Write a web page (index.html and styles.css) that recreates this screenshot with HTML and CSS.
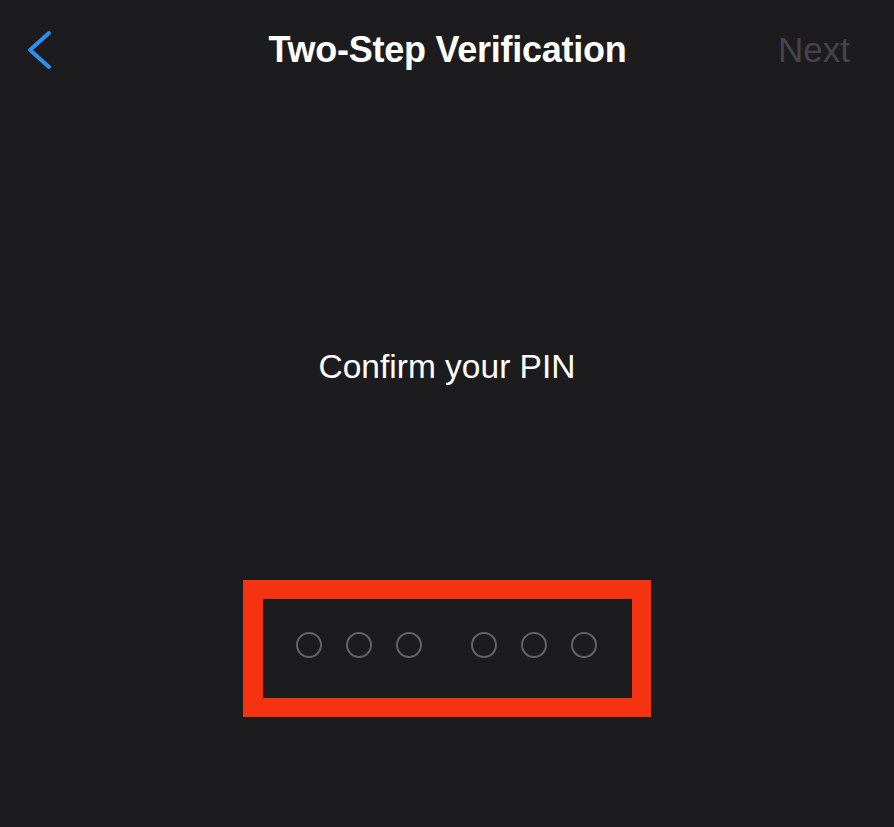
FILE: index.html
```html
<html lang="en">

<head>
  <meta charset="UTF-8">
  <meta name="viewport" content="width=device-width, initial-scale=1.0">
  <title>Two-Step Verification</title>
  <link rel="stylesheet" href="styles.css">
</head>

<body>
  <div class="header">
    <button class="back" aria-label="Back">
      <svg width="30" height="42" viewBox="0 0 30 42">
        <path d="M25 4 L6 21 L25 38" fill="none" stroke="#2f8ff0" stroke-width="4" stroke-linecap="round" stroke-linejoin="round" />
      </svg>
    </button>
    <h1 class="title">Two-Step Verification</h1>
    <span class="next">Next</span>
  </div>
  <div class="content">
    <p class="prompt">Confirm your PIN</p>
    <div class="pin-box">
      <div class="pin-group">
        <span class="dot"></span>
        <span class="dot"></span>
        <span class="dot"></span>
      </div>
      <div class="pin-group">
        <span class="dot"></span>
        <span class="dot"></span>
        <span class="dot"></span>
      </div>
    </div>
  </div>
</body>

</html>
```

FILE: styles.css
```css
body {
  background-color: #1c1c1e;
  font-family: "Liberation Sans", Arial, sans-serif;
  margin: 0;
  overflow: hidden;
  height: 827px;
}

.header {
  display: flex;
  align-items: center;
  justify-content: space-between;
  height: 100px;
  padding: 0 44px 0 24px;
}

.back {
  background: none;
  border: none;
  padding: 0;
  width: 141px;
  display: flex;
  align-items: center;
  cursor: pointer;
}

.title {
  margin: 0;
  color: #fff;
  font-size: 36px;
  font-weight: bold;
  letter-spacing: -0.25px;
}

.next {
  width: 120px;
  text-align: right;
  color: #454547;
  font-size: 35px;
}

.content {
  display: flex;
  flex-direction: column;
  align-items: center;
}

.prompt {
  margin: 247px 0 0 0;
  color: #fff;
  font-size: 33.5px;
  line-height: 40px;
}

.pin-box {
  margin-top: 193px;
  width: 367px;
  height: 92px;
  padding: 0 2px 7px 0;
  border: 19px solid #f53312;
  border-left-width: 20px;
  display: flex;
  align-items: center;
  justify-content: center;
  gap: 49px;
}

.pin-group {
  display: flex;
  gap: 24px;
}

.dot {
  width: 22px;
  height: 22px;
  border: 2px solid #646466;
  border-radius: 50%;
}
```
